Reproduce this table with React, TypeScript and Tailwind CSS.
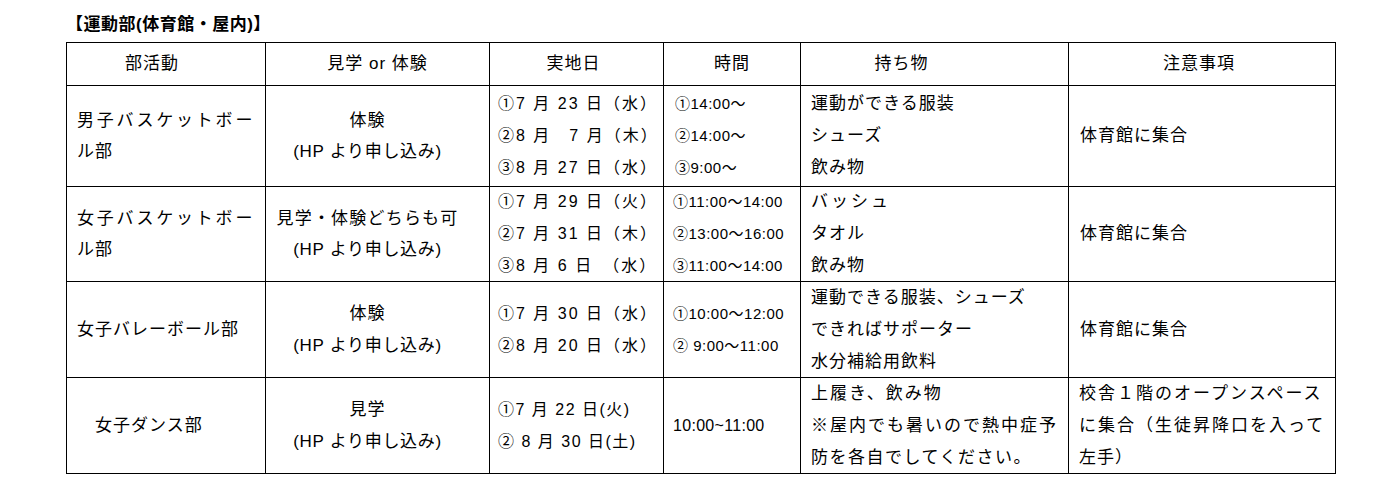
import React from "react";

const cell = "border-l border-t border-black flex flex-col justify-center";

export default function App() {
  return (
    <div className="w-[1399px] h-[499px] bg-white text-black font-['Liberation_Sans','Noto_Sans_CJK_JP',sans-serif] pl-[66px] pt-[14px]">
      <div className="h-[28px] text-[17px] leading-[22px] font-bold tracking-[0.5px]">【運動部(体育館・屋内)】</div>
      <div className="grid grid-cols-[199px_224px_174px_137px_268px_267px] grid-rows-[43px_101px_95px_96px_96px] w-[1270px] border-r border-b border-black text-[17px] tracking-[1px]">
        {/* header */}
        <div className={`${cell} items-center pr-[28px]`}>部活動</div>
        <div className={`${cell} items-center`}>見学 or 体験</div>
        <div className={`${cell} items-center pr-[6px]`}>実地日</div>
        <div className={`${cell} items-center`}>時間</div>
        <div className={`${cell} items-center pr-[66px]`}>持ち物</div>
        <div className={`${cell} items-center pr-[6px]`}>注意事項</div>

        {/* row 1 */}
        <div className={`${cell} pl-[10px] leading-[31px]`}>
          <div className="tracking-[2.8px]">男子バスケットボー</div>
          <div>ル部</div>
        </div>
        <div className={`${cell} items-center leading-[31px] pr-[20px]`}>
          <div>体験</div>
          <div className="tracking-[0.7px]">(HP より申し込み)</div>
        </div>
        <div className={`${cell} pl-[8px] leading-[32px] text-[16px] tracking-[2px]`}>
          <div>①7 月 23 日（水）</div>
          <div>②8 月　7 月（木）</div>
          <div>③8 月 27 日（水）</div>
        </div>
        <div className={`${cell} pl-[11px] leading-[32px] text-[15px] tracking-[0.5px]`}>
          <div>①14:00～</div>
          <div>②14:00～</div>
          <div>③9:00～</div>
        </div>
        <div className={`${cell} pl-[10px] leading-[32px]`}>
          <div>運動ができる服装</div>
          <div>シューズ</div>
          <div>飲み物</div>
        </div>
        <div className={`${cell} pl-[11px]`}>体育館に集合</div>

        {/* row 2 */}
        <div className={`${cell} pl-[10px] leading-[31px]`}>
          <div className="tracking-[2.8px]">女子バスケットボー</div>
          <div>ル部</div>
        </div>
        <div className={`${cell} items-center leading-[31px] pr-[20px]`}>
          <div className="tracking-[1.2px]">見学・体験どちらも可</div>
          <div className="tracking-[0.7px]">(HP より申し込み)</div>
        </div>
        <div className={`${cell} pl-[8px] leading-[32px] text-[16px] tracking-[2px]`}>
          <div>①7 月 29 日（火）</div>
          <div>②7 月 31 日（木）</div>
          <div>③8 月 6 日　（水）</div>
        </div>
        <div className={`${cell} pl-[9px] leading-[32px] text-[15px] tracking-[0.5px]`}>
          <div>①11:00～14:00</div>
          <div>②13:00～16:00</div>
          <div>③11:00～14:00</div>
        </div>
        <div className={`${cell} pl-[10px] leading-[32px]`}>
          <div className="tracking-[3px]">バッシュ</div>
          <div>タオル</div>
          <div>飲み物</div>
        </div>
        <div className={`${cell} pl-[11px]`}>体育館に集合</div>

        {/* row 3 */}
        <div className={`${cell} pl-[10px]`}>
          <div>女子バレーボール部</div>
        </div>
        <div className={`${cell} items-center leading-[32px] pr-[20px]`}>
          <div>体験</div>
          <div className="tracking-[0.7px]">(HP より申し込み)</div>
        </div>
        <div className={`${cell} pl-[8px] leading-[32px] text-[16px] tracking-[2px]`}>
          <div>①7 月 30 日（水）</div>
          <div>②8 月 20 日（水）</div>
        </div>
        <div className={`${cell} pl-[9px] leading-[32px] text-[15px] tracking-[0.5px]`}>
          <div>①10:00～12:00</div>
          <div>② 9:00～11:00</div>
        </div>
        <div className={`${cell} pl-[10px] leading-[32px]`}>
          <div>運動できる服装、シューズ</div>
          <div>できればサポーター</div>
          <div>水分補給用飲料</div>
        </div>
        <div className={`${cell} pl-[11px]`}>体育館に集合</div>

        {/* row 4 */}
        <div className={`${cell} pl-[10px]`}>
          <div>　女子ダンス部</div>
        </div>
        <div className={`${cell} items-center leading-[32px] pr-[20px]`}>
          <div>見学</div>
          <div className="tracking-[0.7px]">(HP より申し込み)</div>
        </div>
        <div className={`${cell} pl-[8px] leading-[32px] text-[16px] tracking-[1.5px]`}>
          <div>①7 月 22 日(火)</div>
          <div>② 8 月 30 日(土)</div>
        </div>
        <div className={`${cell} pl-[9px] text-[16px] tracking-[0.3px]`}>
          <div>10:00~11:00</div>
        </div>
        <div className={`${cell} pl-[10px] leading-[32px]`}>
          <div className="tracking-[2px]">上履き、飲み物</div>
          <div className="tracking-[2px]">※屋内でも暑いので熱中症予</div>
          <div className="tracking-[1.5px]">防を各自でしてください。</div>
        </div>
        <div className={`${cell} pl-[10px] leading-[32px]`}>
          <div className="tracking-[2px]">校舎１階のオープンスペース</div>
          <div className="tracking-[2px]">に集合（生徒昇降口を入って</div>
          <div>左手）</div>
        </div>
      </div>
    </div>
  );
}
